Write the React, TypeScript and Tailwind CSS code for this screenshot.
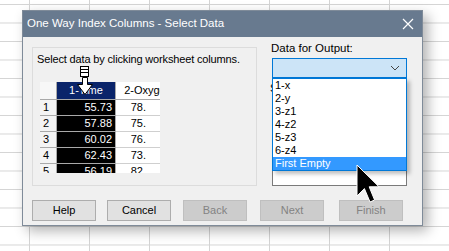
import React from "react"

const rows = [
  ["1", "55.73", "78."],
  ["2", "57.88", "75."],
  ["3", "60.02", "76."],
  ["4", "62.43", "73."],
  ["5", "56.19", "82."],
]

const outputs = ["1-x", "2-y", "3-z1", "4-z2", "5-z3", "6-z4", "First Empty"]

const buttons = [
  { label: "Help", enabled: true, gap: "" },
  { label: "Cancel", enabled: true, gap: "ml-[11px]" },
  { label: "Back", enabled: false, gap: "ml-[12px]" },
  { label: "Next", enabled: false, gap: "ml-[13px]" },
  { label: "Finish", enabled: false, gap: "ml-[15px]" },
]

// down-arrow cursor used by the worksheet when picking a column
const ColumnCursor = () => (
  <svg width="18" height="30" viewBox="0 0 18 30" className="absolute left-[43px] top-[18px]">
    <rect x="4.5" y="0.5" width="8" height="3" fill="white" stroke="black" />
    <rect x="4.5" y="3.5" width="8" height="3" fill="white" stroke="black" />
    <rect x="4.5" y="6.5" width="8" height="4" fill="white" stroke="black" />
    <path d="M6.5 11.5 H11.5 V18.5 H16.5 L9 28.5 L1.5 18.5 H6.5 Z" fill="white" stroke="black" />
  </svg>
)

const Pointer = () => (
  <svg width="24" height="40" viewBox="0 0 12 20" className="absolute left-[356px] top-[164px]">
    <path d="M0.5 0.5 L0.5 16 L4.2 12.3 L7 19 L9.3 18 L6.6 11.4 L11.5 11.4 Z" fill="black" stroke="white" strokeWidth="0.5" />
  </svg>
)

export default function App() {
  return (
    <div className="relative w-[449px] h-[251px] overflow-hidden bg-white bg-[linear-gradient(to_right,#d4d4d4_1px,transparent_1px),linear-gradient(to_bottom,#d4d4d4_1px,transparent_1px)] bg-[size:60px_18.5px] bg-[position:29px_4px] font-['Liberation_Sans',Arial,sans-serif] text-[11px] text-black">
      <div className="absolute left-[22px] top-[10px] w-[401px] h-[216px] flex flex-col border border-[#7f8b99] bg-[#f0f0f0] shadow-[5px_5px_12px_rgba(0,0,0,0.3)]">
        {/* title bar */}
        <div className="h-[26px] shrink-0 bg-[#687a8f] flex items-center justify-between pl-[4px] pr-[8px] text-white text-[11.5px]">
          <span>One Way Index Columns - Select Data</span>
          <svg width="12" height="12" viewBox="0 0 12 12">
            <path d="M1 1 L11 11 M11 1 L1 11" stroke="white" strokeWidth="1.2" />
          </svg>
        </div>

        <div className="flex items-start pl-[9px] pt-[10px] gap-[15px]">
          {/* worksheet group */}
          <div className="relative w-[225px] h-[139px] border border-[#dcdcdc] pl-[4px] pt-[4px]">
            <div className="h-[14px] leading-[14px] tracking-[-0.15px] whitespace-nowrap">Select data by clicking worksheet columns.</div>
            <div className="mt-[16px] ml-[3px] w-[120px] h-[91px] overflow-hidden">
              <div className="grid grid-cols-[17px_59px_64px]">
                <div className="h-[18px] bg-[#f7f7f7] border-r border-b border-[#a9a9a9]" />
                <div className="h-[18px] bg-[#0a246a] text-white flex items-center justify-center border-r border-b border-[#a9a9a9]">1-Time</div>
                <div className="h-[18px] bg-white flex items-center justify-center border-b border-[#a9a9a9] whitespace-nowrap">2-Oxygen</div>
                {rows.map(([n, a, b]) => (
                  <React.Fragment key={n}>
                    <div className="h-[16px] bg-[#f4f4f4] flex items-center pl-[3px] border-r border-b border-[#a9a9a9]">{n}</div>
                    <div className="h-[16px] bg-black text-white flex items-center justify-end pr-[3px] border-r border-b border-[#a9a9a9]">{a}</div>
                    <div className="h-[16px] bg-white flex items-center justify-end pr-[34px] border-b border-[#cfcfcf]">{b}</div>
                  </React.Fragment>
                ))}
              </div>
            </div>
            <ColumnCursor />
          </div>

          {/* output side */}
          <div className="relative -mt-[6px] w-[135px] flex flex-col">
            <div className="h-[14px] leading-[14px] -ml-[1px] text-[11.5px]">Data for Output:</div>
            <div className="mt-[3px] h-[20px] border border-[#0078d7] bg-[#cce4f7] flex items-center justify-end pr-[6px]">
              <svg width="10" height="6" viewBox="0 0 10 6">
                <path d="M1 1 L5 5 L9 1" fill="none" stroke="#444" strokeWidth="1" />
              </svg>
            </div>
            <div className="mt-[3px] -ml-[2px] h-[14px] leading-[14px]">Sheet</div>
            <div className="mt-[1px] h-[90px] bg-white border border-[#7a7a7a]" />
            <div className="absolute left-0 top-[37px] w-[135px] h-[93px] bg-white border border-[#0078d7] shadow-[3px_3px_4px_rgba(0,0,0,0.25)]">
              {outputs.map((o, i) => (
                <div
                  key={o}
                  className={
                    i === outputs.length - 1
                      ? "h-[13px] leading-[13px] pl-[2px] bg-[#3399ff] text-white"
                      : "h-[13px] leading-[13px] pl-[2px]"
                  }
                >
                  {o}
                </div>
              ))}
            </div>
          </div>
        </div>

        {/* buttons */}
        <div className="flex pl-[9px] pt-[14px]">
          {buttons.map((b) => (
            <div
              key={b.label}
              className={
                b.enabled
                  ? `${b.gap} w-[64px] h-[21px] flex items-center justify-center bg-[#e1e1e1] border border-[#adadad]`
                  : `${b.gap} w-[64px] h-[21px] flex items-center justify-center bg-[#cccccc] border border-[#bfbfbf] text-[#838383]`
              }
            >
              {b.label}
            </div>
          ))}
        </div>
      </div>
      <Pointer />
    </div>
  )
}
